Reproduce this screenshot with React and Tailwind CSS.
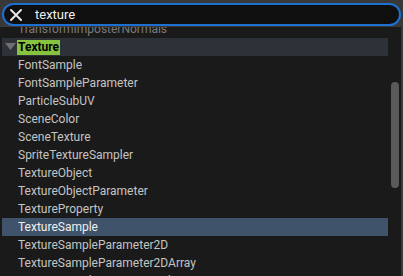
import React from "react";

const items = [
  "FontSample",
  "FontSampleParameter",
  "ParticleSubUV",
  "SceneColor",
  "SceneTexture",
  "SpriteTextureSampler",
  "TextureObject",
  "TextureObjectParameter",
  "TextureProperty",
  "TextureSample",
  "TextureSampleParameter2D",
  "TextureSampleParameter2DArray",
  "TextureSampleParameterCube",
];

export default function App() {
  return (
    <div
      className="w-[403px] h-[276px] overflow-hidden bg-[#1a1a1a] flex flex-col relative"
      style={{ fontFamily: "Roboto, 'Noto Sans', sans-serif" }}
    >
      <div className="h-[27px] shrink-0 bg-[#383838] pt-[3px] pl-[2px] pr-[2px] relative z-10">
        <div className="h-[23px] rounded-full border-2 border-[#1d6fd0] bg-[#0f0f0f] flex items-center pl-[5px]">
          <svg width="14" height="14" viewBox="0 0 14 14" className="shrink-0">
            <path d="M2 2 L12 12 M12 2 L2 12" stroke="#e6e6e6" strokeWidth="2" strokeLinecap="round" />
          </svg>
          <span className="ml-[12px] text-[13px] text-[#f0f0f0] leading-none">texture</span>
        </div>
      </div>
      <div className="flex flex-1 min-h-0 border-r-2 border-[#3a3a3a]">
        <div className="w-[386px] ml-[2px] -mt-[7px] flex flex-col">
          <div className="h-[18px] shrink-0 flex items-center pl-[16px] text-[12px] text-[#7a7a7a] whitespace-nowrap">
            TransformImposterNormals
          </div>
          <div className="h-[18px] shrink-0 flex items-center bg-[#2d3238] pl-[3px]">
            <svg width="11" height="8" viewBox="0 0 11 8" className="shrink-0">
              <path d="M0 0 L11 0 L5.5 7 Z" fill="#6f6f6f" />
            </svg>
            <span className="ml-[1px] bg-[#86c43f] text-black font-bold text-[12px] leading-[15px] px-[1px]">
              Texture
            </span>
          </div>
          {items.map((t) => (
            <div
              key={t}
              className={
                "h-[18px] shrink-0 flex items-center pl-[16px] text-[12px] whitespace-nowrap " +
                (t === "TextureSample" ? "bg-[#3f546a] text-[#f0f0f0]" : "text-[#c4c4c4]")
              }
            >
              {t}
            </div>
          ))}
        </div>
        <div className="flex-1 flex justify-center">
          <div className="w-[8px] h-[106px] mt-[55px] rounded-full bg-[#5a5a5a]" />
        </div>
      </div>
    </div>
  );
}
